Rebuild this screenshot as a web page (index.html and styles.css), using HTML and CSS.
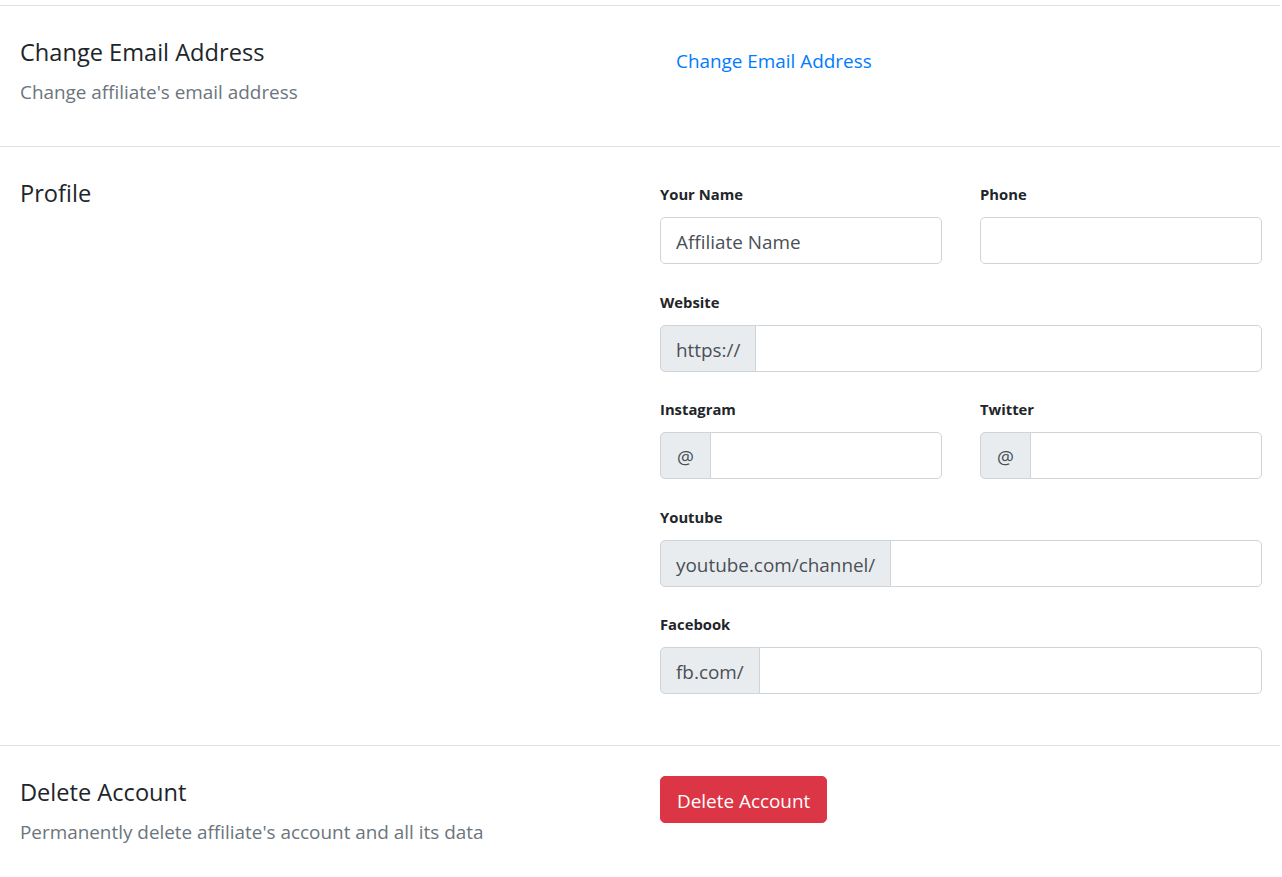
FILE: index.html
```html
<!DOCTYPE html>
<html lang="en">
<head>
<meta charset="utf-8">
<title>Affiliate settings</title>
<link rel="stylesheet" href="styles.css">
</head>
<body>
<div class="page">
  <section class="section">
    <div class="col-info">
      <h5 class="section-title">Change Email Address</h5>
      <p class="section-desc">Change affiliate's email address</p>
    </div>
    <div class="col-body">
      <a class="btn btn-link" href="#">Change Email Address</a>
    </div>
  </section>

  <section class="section section-profile">
    <div class="col-info">
      <h5 class="section-title">Profile</h5>
    </div>
    <div class="col-body">
      <form class="profile-form">
        <div class="form-row">
          <div class="form-group">
            <label class="form-label">Your Name</label>
            <input class="form-control" type="text" value="Affiliate Name">
          </div>
          <div class="form-group">
            <label class="form-label">Phone</label>
            <input class="form-control" type="text" value="">
          </div>
        </div>
        <div class="form-group">
          <label class="form-label">Website</label>
          <div class="input-group">
            <span class="input-prepend">https://</span>
            <input class="form-control group-control" type="text" value="">
          </div>
        </div>
        <div class="form-row">
          <div class="form-group">
            <label class="form-label">Instagram</label>
            <div class="input-group">
              <span class="input-prepend prepend-at">@</span>
              <input class="form-control group-control" type="text" value="">
            </div>
          </div>
          <div class="form-group">
            <label class="form-label">Twitter</label>
            <div class="input-group">
              <span class="input-prepend prepend-at">@</span>
              <input class="form-control group-control" type="text" value="">
            </div>
          </div>
        </div>
        <div class="form-group">
          <label class="form-label">Youtube</label>
          <div class="input-group">
            <span class="input-prepend">youtube.com/channel/</span>
            <input class="form-control group-control" type="text" value="">
          </div>
        </div>
        <div class="form-group">
          <label class="form-label">Facebook</label>
          <div class="input-group">
            <span class="input-prepend">fb.com/</span>
            <input class="form-control group-control" type="text" value="">
          </div>
        </div>
      </form>
    </div>
  </section>

  <section class="section">
    <div class="col-info">
      <h5 class="section-title">Delete Account</h5>
      <p class="section-desc">Permanently delete affiliate's account and all its data</p>
    </div>
    <div class="col-body">
      <button class="btn btn-danger" type="button">Delete Account</button>
    </div>
  </section>
</div>
</body>
</html>
```
FILE: styles.css
```css
* { box-sizing: border-box; }

html, body {
  margin: 0;
  padding: 0;
  background: #fff;
}

body {
  font-family: "Open Sans", "Noto Sans", Arial, sans-serif;
  font-size: 18.9px;
  line-height: 30px;
  color: #212529;
}

.page {
  padding-top: 5px;
  margin-right: 2px;
}

.section {
  display: grid;
  grid-template-columns: 640px 1fr;
  border-top: 1px solid #dee2e6;
  padding: 30px 0;
}

.section-profile {
  padding-bottom: 25px;
}

.col-info {
  padding: 0 20px;
}

.col-body {
  padding: 0 18px 0 20px;
}

.section-title {
  margin: 1px 0 10px;
  font-size: 23.6px;
  line-height: 30px;
  font-weight: 400;
  color: #212529;
}

.section-desc {
  margin: 0 0 9px;
  font-size: 18.9px;
  line-height: 30px;
  color: #6c757d;
}

.btn {
  display: inline-block;
  font-family: inherit;
  font-size: 18.9px;
  line-height: 30px;
  padding: 8.5px 15px 6.5px;
  border: 1px solid transparent;
  border-radius: 5px;
  text-decoration: none;
  cursor: pointer;
}

.btn-link {
  color: #007bff;
  background: transparent;
}

.btn-danger {
  padding: 9.5px 16px 5.5px;
  color: #fff;
  background: #dc3545;
  border-color: #dc3545;
}

.profile-form {
  padding-top: 5px;
  margin: 0;
}

.form-row {
  display: grid;
  grid-template-columns: 1fr 1fr;
  column-gap: 38px;
}

.form-group {
  margin-bottom: 25.5px;
}

.form-label {
  display: block;
  font-size: 14.8px;
  line-height: 24px;
  font-weight: 700;
  color: #212529;
  margin-bottom: 11px;
}

.form-control {
  display: block;
  width: 100%;
  height: 47px;
  padding: 8.5px 15px 6.5px;
  font-family: inherit;
  font-size: 18.9px;
  line-height: 30px;
  color: #495057;
  background: #fff;
  border: 1px solid #ced4da;
  border-radius: 5px;
  outline: none;
}

.input-group {
  display: flex;
  align-items: stretch;
  width: 100%;
}

.input-prepend {
  display: flex;
  align-items: center;
  padding: 3px 15px 0;
  height: 47px;
  font-size: 18.9px;
  line-height: 30px;
  color: #495057;
  background: #e9ecef;
  border: 1px solid #ced4da;
  border-radius: 5px 0 0 5px;
  white-space: nowrap;
}

.prepend-at {
  padding-left: 16px;
  padding-right: 16px;
}

.group-control {
  flex: 1 1 auto;
  width: 1%;
  min-width: 0;
  margin-left: -1px;
  border-radius: 0 5px 5px 0;
}
```
